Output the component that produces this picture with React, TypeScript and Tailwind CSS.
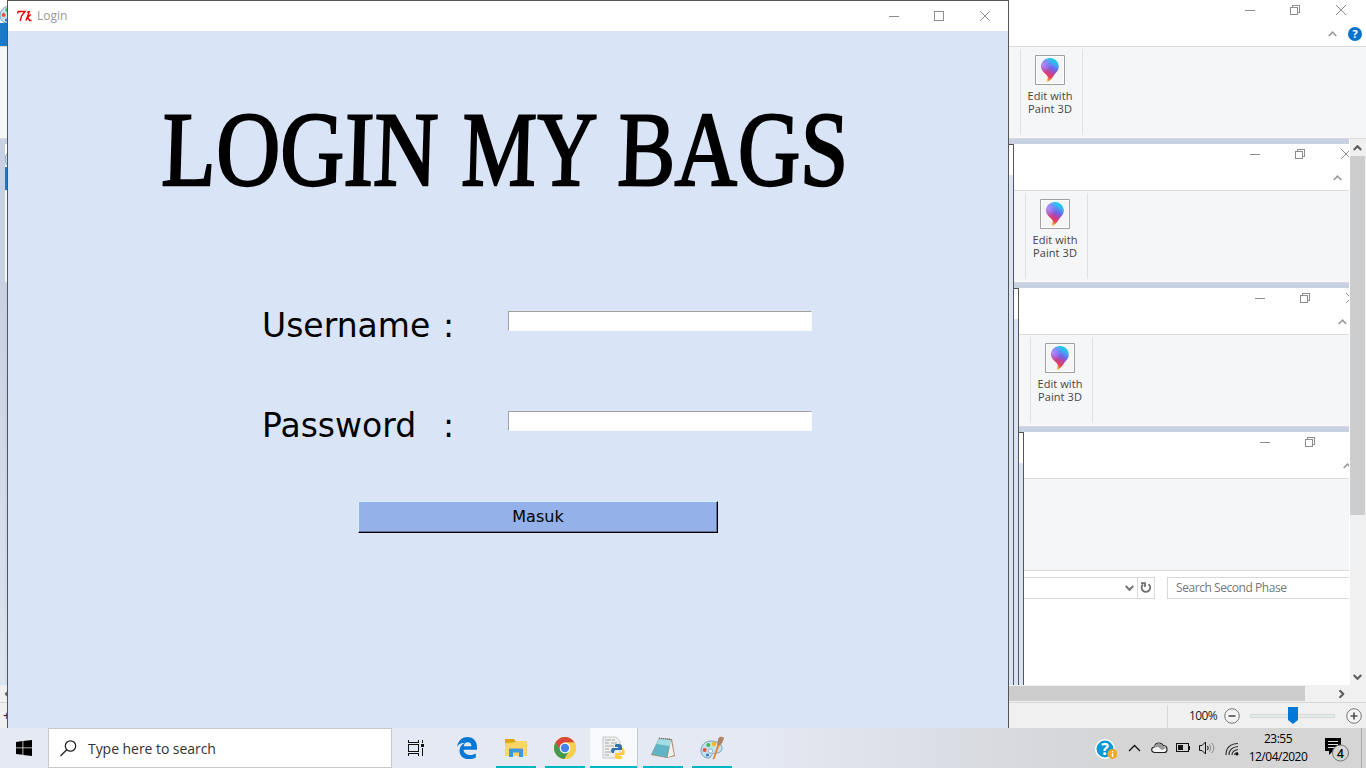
import React from "react";

type Kids = { children?: React.ReactNode };

function Minimize() {
  return <svg width="10" height="10" viewBox="0 0 10 10" shapeRendering="crispEdges"><path d="M0 5.5H10" stroke="#8d8d8d" /></svg>;
}
function Restore() {
  return (
    <svg width="10" height="10" viewBox="0 0 10 10" fill="none" stroke="#8d8d8d" shapeRendering="crispEdges">
      <path d="M.5 2.5H7.5V9.5H.5ZM2.5 2.5V.5H9.5V7.5H7.5" />
    </svg>
  );
}
function Maximize() {
  return <svg width="10" height="10" viewBox="0 0 10 10" fill="none" stroke="#8d8d8d" shapeRendering="crispEdges"><path d="M.5 .5H9.5V9.5H.5Z" /></svg>;
}
function Close() {
  return <svg width="10" height="10" viewBox="0 0 10 10" stroke="#8d8d8d"><path d="M0 0L10 10M10 0L0 10" /></svg>;
}
function Chevron({ className, color = "#606060", w = 1.8 }: { className?: string; color?: string; w?: number }) {
  return (
    <svg className={className} width="9" height="6" viewBox="0 0 9 6" fill="none" stroke={color} strokeWidth={w}>
      <path d="M.7 5L4.5 1.2L8.3 5" />
    </svg>
  );
}

function Paint3D() {
  return (
    <svg className="shrink-0" width="30" height="30" viewBox="0 0 30 30">
      <defs>
        <linearGradient id="drop" x1="0.75" y1="0" x2="0.35" y2="1">
          <stop offset="0" stopColor="#05dbe8" />
          <stop offset=".2" stopColor="#3fb0f0" />
          <stop offset=".42" stopColor="#6f62ec" />
          <stop offset=".6" stopColor="#b8459f" />
          <stop offset=".76" stopColor="#e63a62" />
          <stop offset=".9" stopColor="#f08a28" />
          <stop offset="1" stopColor="#ffd21e" />
        </linearGradient>
        <radialGradient id="glow" cx="0.12" cy="0.35" r="0.45">
          <stop offset="0" stopColor="#b58cff" />
          <stop offset="1" stopColor="#b58cff" stopOpacity="0" />
        </radialGradient>
      </defs>
      <path d="M.5 .5H29.5V29.5H.5Z" fill="#fff" stroke="#a0a0a0" />
      <path d="M2 2H28V28H2Z" fill="#f5f5f6" />
      <path d="M15 3C10 3 6.2 6.7 6.2 11.5C6.2 17 11.500 18.500 12.600 21.500C13.200 23.200 12 25.500 12 27C15.500 25.500 17.600 22.400 19 20.200C21 17.200 23.800 15.500 23.800 11.5C23.800 6.7 20 3 15 3Z" fill="url(#drop)" />
      <path d="M15 3C10 3 6.2 6.7 6.2 11.5C6.2 17 11.5 19 12.8 21.5L20 19C21 17.6 23.8 15.5 23.8 11.5C23.8 6.7 20 3 15 3Z" fill="url(#glow)" />
    </svg>
  );
}

function Palette() {
  return (
    <svg width="24" height="24" viewBox="0 0 24 24">
      <path d="M11 5C5 5 1 9.500 1 14.500C1 19.500 5 22.500 9 22C12 21.500 10.500 18 13.500 17.500C17.500 17 22 17 22 12C22 7.500 17 5 11 5Z" fill="#c3e0ee" stroke="#6a9db6" strokeWidth=".9" />
      <circle cx="10.500" cy="15" r="2.100" fill="#f4f8fb" stroke="#6a9db6" strokeWidth=".7" />
      <circle cx="4.700" cy="14" r="2" fill="#e5533d" />
      <circle cx="8.300" cy="9" r="2" fill="#49b749" />
      <circle cx="14" cy="8" r="2.200" fill="#f6b51c" />
      <circle cx="7.500" cy="19" r="1.600" fill="#3f79cf" />
      <path d="M12.500 23.500L17.500 8.500L19.500 9.300L14.500 23Z" fill="#e3883a" />
      <path d="M17 8.500L18.300 2.500C19.500 .3 22.500 .3 24 2C23 5 22 7.500 20 9.800Z" fill="#b08464" />
    </svg>
  );
}

function TitleControls({ help }: { help?: boolean }) {
  return (
    <div className="flex h-[46px] flex-col bg-white pl-[1245px]">
      <div className="flex h-[26px] w-[101px] items-start justify-between pt-[5px]">
        <Minimize />
        <span className="-ml-px"><Restore /></span>
        <Close />
      </div>
      <div className="flex h-5 items-start pl-[83px] pt-[1px]">
        <Chevron className="mt-1" color="#999" w={1.6} />
        {help && (
          <span className="ml-[11px] flex size-[14px] shrink-0 items-center justify-center rounded-full bg-[#0873cf] font-['Open_Sans',sans-serif] text-[11px] font-bold text-white">?</span>
        )}
      </div>
    </div>
  );
}

function Ribbon({ children }: Kids) {
  return <div className="flex h-[93px] border-y border-[#d9dadc] bg-[#f5f6f7] pl-[1020px]">{children}</div>;
}

function PaintWindow({ help, children }: Kids & { help?: boolean }) {
  return (
    <div className="relative w-[1366px]">
      <TitleControls help={help} />
      <div className="absolute left-[-1px] top-[1px]"><Palette /></div>
      <div className="absolute left-0 top-[23px] h-[23px] w-12 bg-[#1979ca]" />
      <Ribbon>
        <div className="mt-[2px] flex h-[86px] w-[63px] flex-col items-start border-x border-[#e0e1e3] pl-[6px] pt-[6px] font-['Open_Sans',sans-serif] text-[11px] leading-[13px] text-[#444]">
          <div className="pl-[8px]"><Paint3D /></div>
          <div className="mt-[4px] w-[46px] whitespace-nowrap text-center tracking-[0.08px]">Edit with<br />Paint 3D</div>
        </div>
      </Ribbon>
      <div className="relative h-[546px] bg-linear-to-b from-[#c7d1e2] from-25% to-[#dce6f2]">{children}</div>
    </div>
  );
}

function LoginEdge() {
  return (
    <div className="absolute left-[7px] top-0 z-20 h-[728px] w-[1002px] border border-[#555] bg-[#d9e4f6]">
      <div className="h-[30px] bg-white" />
    </div>
  );
}

/* A canvas holding a picture of the desktop, shifted by the paint canvas margin. */
function Canvas({ children }: Kids) {
  return <div className="absolute left-[5px] top-[5px] isolate h-[728px] w-[1366px] overflow-hidden bg-white">{children}</div>;
}

function ExplorerWindow() {
  return (
    <div className="w-[1366px] bg-white">
      <TitleControls />
      <Ribbon />
      <div className="flex items-start pt-[6px] font-['Open_Sans',sans-serif] text-[12px] text-[#777]">
        <div className="flex h-[22px] w-[1140px] shrink-0 border border-[#d9d9d9]">
          <div className="flex flex-1 items-center justify-end pr-[3px]"><Chevron className="rotate-180" color="#777" w={2.2} /></div>
          <div className="flex w-[17px] items-center justify-center border-l border-[#d9d9d9]">
            <svg width="12" height="12" viewBox="0 0 12 12" fill="none" stroke="#707070" strokeWidth="1.8"><path d="M3 2.500A4.300 4.300 0 1 0 8.500 2.200M1 1.200H5V5" /></svg>
          </div>
        </div>
        <div className="ml-3 flex h-[22px] w-[230px] shrink-0 items-center border border-[#d9d9d9] pl-2 tracking-[-0.44px]">Search Second Phase</div>
      </div>
    </div>
  );
}

function Field({ label, type }: { label: string; type: string }) {
  return (
    <label className="flex h-[100px] items-start">
      <span className="w-[181px] text-[33px] leading-[40px]">{label}</span>
      <span className="w-[65px] text-[33px] leading-[40px]">:</span>
      <input type={type} className="mt-[5px] h-[20px] w-[304px] border border-[#fbfcfe] border-l-[#a0a0a0] border-t-[#a0a0a0] bg-white outline-none" />
    </label>
  );
}

function LoginWindow() {
  return (
    <section className="absolute left-[7px] top-0 z-30 flex h-[728px] w-[1002px] flex-col border-x border-t border-[#555] bg-[#d9e4f6] font-['DejaVu_Sans',sans-serif] text-black">
      <header className="flex h-[30px] shrink-0 items-center bg-white pl-[9px] font-['Open_Sans',sans-serif] text-[12px] text-[#999]">
        <svg width="15" height="12" viewBox="0 0 15 12" fill="none" stroke="#f00000" strokeWidth="1.400"><path d="M.5 3.500L1.200 1.500H8L4.500 6L3.200 11M12.500 1L9 10.500M13.800 4.500L10.500 7.500L12.800 10.500H14.500M10 2.500L12.500 1" /></svg>
        <span className="ml-[5px] flex-1">Login</span>
        <div className="flex w-[101px] justify-between"><Minimize /><span className="-ml-px"><Maximize /></span><Close /></div>
        <div className="w-[18px]" />
      </header>
      <h1 className="flex h-[196px] shrink-0 items-start whitespace-pre pl-[154px] pt-[57px] font-['Liberation_Serif',serif] text-[106px] leading-[123px] [-webkit-text-stroke:2.4px_black]">
        <span className="w-[300px] origin-left -skew-x-2 scale-x-[.837]">LOGIN</span>
        <span className="w-[156px] origin-left -skew-x-2 scale-x-[.79]">MY</span>
        <span className="origin-left -skew-x-2 scale-x-[.815]">BAGS</span>
      </h1>
      <form className="mt-[79px] flex flex-col pl-[254px]" onSubmit={(e) => e.preventDefault()}>
        <Field label="Username" type="text" />
        <Field label="Password" type="password" />
        <button className="-mt-[5px] ml-[96px] h-[32px] w-[360px] border border-black border-l-[#d5f3ff] border-t-[#d5f3ff] bg-[#94b1e9] text-[16px] leading-none shadow-[inset_-1px_-1px_#60749b]">Masuk</button>
      </form>
    </section>
  );
}

function PaintFooter() {
  return (
    <div className="flex h-[43px] flex-col bg-[#f0f0f0]">
      <div className="flex h-[18px] shrink-0 items-center border-b border-[#d7d7d7]">
        <div className="w-4 pl-[3px]"><Chevron className="-rotate-90" /></div>
        <div className="h-[15px] w-[1289px] bg-[#cdcdcd]" />
        <Chevron className="ml-8 rotate-90" w={2.200} />
      </div>
      <div className="flex h-[25px] items-center pt-px font-['Open_Sans',sans-serif] text-[12px] text-[#222]">
        <span className="w-[1167px] pl-[3px]">+</span>
        <div className="h-[23px] w-px bg-[#d7d7d7]" />
        <span className="ml-[21px] w-[35px] tracking-[-0.6px]">100%</span>
        <ZoomButton d="M4.500 8H11.500" />
        <div className="relative ml-[10px] h-[4px] w-[85px] border border-[#d6dcdc] bg-[#e7eaea]">
          <svg className="absolute -top-[8px] left-[37px]" width="10" height="17" viewBox="0 0 10 17"><path d="M0 0H10V13L5 17L0 13Z" fill="#0078d7" /></svg>
        </div>
        <span className="ml-[11px]"><ZoomButton d="M4.500 8H11.500M8 4.500V11.500" /></span>
      </div>
    </div>
  );
}
function ZoomButton({ d }: { d: string }) {
  return <svg width="16" height="16" viewBox="0 0 16 16"><circle cx="8" cy="8" r="7.300" fill="#f4f4f4" stroke="#777" /><path d={d} stroke="#555" strokeWidth="1.700" /></svg>;
}

function VScroll() {
  return (
    <div className="absolute left-[1349px] top-[139px] flex h-[546px] w-[17px] flex-col items-center border-l border-white bg-[#f0f0f0] pr-px">
      <Chevron className="mb-[5px] mt-[6px] shrink-0" w={2.200} />
      <div className="h-[359px] w-[15px] shrink-0 bg-[#cdcdcd]" />
      <Chevron className="mt-auto mb-[5px] shrink-0 rotate-180" w={2.200} />
    </div>
  );
}

function TaskApp({ children, on = true, active }: Kids & { on?: boolean; active?: boolean }) {
  return (
    <div className={active ? "mx-[5px] flex h-10 w-12 flex-col items-center border-r border-[#c5cad2] bg-[#f7f9fc]" : "flex h-10 w-10 flex-col items-center"}>
      <div className="flex h-[38px] items-center pt-px">{children}</div>
      {on && <div className="h-[2px] w-full bg-[#00b7c3]" />}
    </div>
  );
}

function Taskbar() {
  return (
    <footer className="flex h-10 items-start bg-linear-to-r from-[#e5e9f3] from-55% via-[#d6d8dd] via-76% to-[#d5d5d5] to-82% font-['Open_Sans',sans-serif] text-black">
      <div className="flex h-10 w-12 items-center justify-center">
        <svg width="16" height="16" viewBox="0 0 16 16"><path d="M0 2L6.500 1.100V7.500H0ZM7.300 1L16 0V7.500H7.300ZM0 8.300H6.500V14.800L0 14ZM7.300 8.300H16V16L7.300 15Z" /></svg>
      </div>
      <div className="flex h-10 w-[344px] items-center border border-[#c8c8c8] bg-white pl-[11px]">
        <svg width="17" height="17" viewBox="0 0 17 17" fill="none" stroke="#222" strokeWidth="1.300"><circle cx="10.500" cy="6" r="5.200" /><path d="M6.700 9.800L.5 16" /></svg>
        <span className="ml-[11px] text-[14px] tracking-[-0.05px] text-[#333]">Type here to search</span>
      </div>
      <svg className="ml-4 mt-3" width="17" height="16" viewBox="0 0 17 16" fill="none" stroke="#111" strokeWidth="1.200" shapeRendering="crispEdges">
        <path d="M.5 0V2.500H10.500V0M.5 4.500H10.500V11.500H.5ZM.5 16V13.500H10.500V16M14.500 0V3M14.500 8V16" /><path d="M13 4H16V7H13Z" fill="#111" stroke="none" />
      </svg>
      <div className="ml-[22px] flex items-start">
        <TaskApp on={false}>
          <svg width="20" height="22" viewBox="0 0 20 22"><path d="M0 9.500C1.500 3 5.500 0 10.500 0C16.500 0 20 4.500 20 10V12.800H6.500C7 16.500 10.200 18 13.200 18C15.500 18 17.200 17.400 18.800 16.500V20.400C17 21.500 14.500 22 11.700 22C6 22 2.500 18.500 2.500 13.700C2.500 10.200 4.600 7.200 8 5.800C4.500 5.800 1.800 7.300 0 9.500ZM6.700 9.300H14.500C14.500 6.800 13 5.200 10.700 5.200C8.500 5.200 7 6.800 6.700 9.300Z" fill="#0878d7" /></svg>
        </TaskApp>
        <div className="w-[9px]" />
        <TaskApp>
          <svg width="22" height="20" viewBox="0 0 22 20"><path d="M0 1.500Q0 1 .5 1H9L10.500 3H21.500V18H0Z" fill="#e0a419" /><path d="M0 5L9 4.500L11 3H21.500V18H0Z" fill="#fdd564" /><path d="M4 19V11.500Q4 10.500 5 10.500H17Q18 10.500 18 11.500V19H14V14.500H8V19Z" fill="#3f99dc" /></svg>
        </TaskApp>
        <div className="w-[9px]" />
        <TaskApp>
          <svg width="22" height="22" viewBox="0 0 22 22"><circle cx="11" cy="11" r="11" fill="#e8bd3c" /><path d="M1.500 5.500A11 11 0 0 1 20.500 5.500H11L6 14Z" fill="#d84738" /><path d="M1.500 5.500A11 11 0 0 0 10.500 22L15.500 13.500L6.200 13.500Z" fill="#429b4c" /><path d="M11 5.500H20.500A11 11 0 0 1 10.500 22L15.500 13.500Z" fill="#f5cf4b" /><circle cx="11" cy="11" r="5.400" fill="#fff" /><circle cx="11" cy="11" r="4.200" fill="#4382e8" /></svg>
        </TaskApp>
        <TaskApp active>
          <svg width="23" height="24" viewBox="0 0 23 24"><path d="M1 1H14L18 5V22H1Z" fill="#eee" stroke="#c8c8c8" /><path d="M3 4H9M10 4H13M3 7H7M9 7H15M3 10H12M3 13H7M3 16H9M3 19H7" stroke="#aaa" /><path d="M14 8H17Q20 8 20 11V14H14Q12 14 12 17H10Q8 15 10 12H16V11H13V9.500Q13 8 14 8Z" fill="#3572a5" /><path d="M20 12H21Q24 14 22 19H17V20H20V21Q20 24 16 23Q12 23 13 19V17H17Q20 17 20 14Z" fill="#ffcf3f" /></svg>
        </TaskApp>
        <TaskApp>
          <svg width="24" height="22" viewBox="0 0 24 22"><path d="M8 1L21 2L24 19L16 21L0 18Z" fill="#a68a68" /><path d="M8 1.500L20 3L15.500 20.500L.5 17Z" fill="#5fb5c6" /><path d="M8 1.500L20 3L18.500 9L5.500 7Z" fill="#a5dce4" /><path d="M20 3L23 18L16.500 20.500Z" fill="#edf1f1" /><path d="M8 1.200L20 2.500" stroke="#777" strokeWidth="1.500" strokeDasharray="1 1" /></svg>
        </TaskApp>
        <div className="w-[9px]" />
        <TaskApp><Palette /></TaskApp>
      </div>
      <div className="ml-auto flex h-10 items-center">
        <svg className="mt-[3px]" width="22" height="22" viewBox="0 0 22 22"><circle cx="10" cy="10" r="10" fill="#fff" /><circle cx="10" cy="10" r="8.500" fill="#0c99d5" /><text x="10" y="15.500" textAnchor="middle" fill="#fff" fontFamily="Open Sans" fontWeight="bold" fontSize="16">?</text><circle cx="17.500" cy="15" r="5" fill="#f5a91e" /><path d="M17.500 12V13.300M17.500 14.300V18" stroke="#fff" strokeWidth="1.400" /></svg>
        <svg className="ml-[11px]" width="13" height="8" viewBox="0 0 13 8" fill="none" stroke="#111" strokeWidth="1.300"><path d="M1 7L6.500 1.500L12 7" /></svg>
        <svg className="ml-[10px]" width="17" height="12" viewBox="0 0 17 12"><path d="M4 10.500C1.500 10.500 .7 9 .7 7.700C.7 6 2 5 3.500 5C4 2.200 6 1 8 1C10 1 11.300 2 12 3.500C14.500 3.500 16 5 16 7.200C16 9.200 14.800 10.500 13 10.500Z" fill="#f3f3f3" stroke="#222" strokeWidth="1.200" /><path d="M3 5.500C4 2 6 1.500 8 1.500Q10.500 1.500 12 4L15 6L11 8L7 5Z" fill="#999" /></svg>
        <svg className="ml-[8px]" width="15" height="10" viewBox="0 0 15 10" fill="none" stroke="#111" shapeRendering="crispEdges"><path d="M.5 .5H12.500V8.500H.5ZM13.500 3V7" /><path d="M2 2H7V7H2Z" fill="#111" stroke="none" /></svg>
        <svg className="ml-[8px]" width="17" height="14" viewBox="0 0 17 14" fill="none" stroke="#111"><path d="M.5 4.500H3L6.500 1V13L3 9.500H.5Z" /><path d="M8.500 5Q10 7 8.500 9" /><path d="M10.500 3.500Q13 7 10.500 10.500M12.800 2Q17 7 12.800 12" stroke="#888" /></svg>
        <svg className="ml-[9px] mt-[2px]" width="14" height="14" viewBox="0 0 14 14" fill="none" stroke="#333" strokeWidth="1.200"><path d="M1 13Q1 2 13 1.500M4 13Q4 5.500 13 4.500M7 13Q7 8.500 13 7.500M9.500 13Q9.500 11 13 10.500" /><circle cx="12" cy="12" r="1.500" fill="#111" stroke="none" /></svg>
        <div className="ml-[9px] w-[60px] whitespace-nowrap text-center text-[12px] leading-[18px] tracking-[-0.5px]">23:55<br />12/04/2020</div>
        <svg className="ml-[16px] mt-[3px]" width="26" height="25" viewBox="0 0 26 25"><path d="M1 1H17V14H9L5 18V14H1Z" /><path d="M4 4.500H14M4 7.500H14M4 10.500H11" stroke="#ddd" /><circle cx="16.500" cy="16" r="8" fill="#d5d5d5" stroke="#777" /><text x="16.500" y="20.500" textAnchor="middle" fontSize="12" fontFamily="Open Sans" fontWeight="600">4</text></svg>
        <div className="ml-[11px] mr-1 h-10 w-px bg-[#aaa]" />
      </div>
    </footer>
  );
}

export default function App() {
  return (
    <main className="h-[768px] w-[1366px] overflow-hidden bg-white">
      <div className="relative h-[728px] overflow-hidden">
        <div className="relative h-[685px] overflow-hidden">
          <PaintWindow help>
            <div className="absolute left-0 top-0 h-[546px] w-[1349px] overflow-hidden">
              <Canvas>
                <LoginEdge />
                <PaintWindow>
                  <Canvas>
                    <LoginEdge />
                    <PaintWindow>
                      <Canvas><LoginEdge /><ExplorerWindow /></Canvas>
                    </PaintWindow>
                  </Canvas>
                </PaintWindow>
              </Canvas>
            </div>
          </PaintWindow>
          <VScroll />
        </div>
        <PaintFooter />
        <LoginWindow />
      </div>
      <Taskbar />
    </main>
  );
}
